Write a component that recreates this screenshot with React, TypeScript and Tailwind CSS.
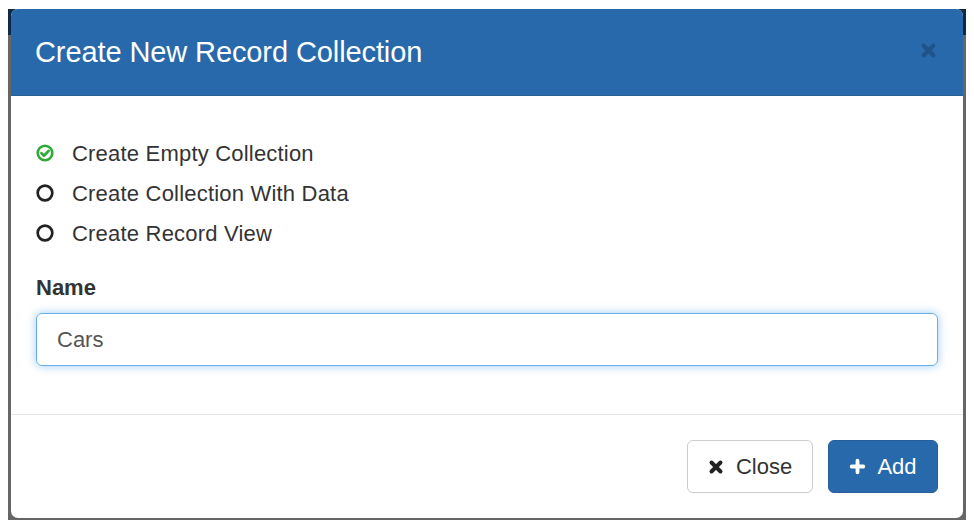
import React from 'react';

// Bold "x" like Font Awesome's fa-times
function TimesIcon({ className = '', width = 3.6 }: { className?: string; width?: number }) {
  return (
    <svg viewBox="0 0 16 16" className={className} fill="none" stroke="currentColor" strokeWidth={width} strokeLinecap="round">
      <path d="M3.5 3.5 L12.5 12.5 M12.5 3.5 L3.5 12.5" />
    </svg>
  );
}

function PlusIcon({ className = '' }: { className?: string }) {
  return (
    <svg viewBox="0 0 16 16" className={className} fill="none" stroke="currentColor" strokeWidth={3.6} strokeLinecap="round">
      <path d="M8 2.5 V13.5 M2.5 8 H13.5" />
    </svg>
  );
}

function RadioIcon({ checked }: { checked: boolean }) {
  if (checked) {
    return (
      <svg viewBox="0 0 16 16" className="w-[18px] h-[18px] text-[#2ea836]" fill="none" stroke="currentColor">
        <circle cx="8" cy="8" r="6.5" strokeWidth={2.3} />
        <path d="M4.8 8.1 L7.1 10.4 L11.2 6.1" strokeWidth={2.4} strokeLinecap="round" strokeLinejoin="round" />
      </svg>
    );
  }
  return (
    <svg viewBox="0 0 16 16" className="w-[18px] h-[18px] text-[#222]" fill="none" stroke="currentColor">
      <circle cx="8" cy="8" r="6.5" strokeWidth={2.4} />
    </svg>
  );
}

const options = [
  { label: 'Create Empty Collection', checked: true },
  { label: 'Create Collection With Data', checked: false },
  { label: 'Create Record View', checked: false },
];

export default function App() {
  return (
    <div className="w-[974px] h-[528px] bg-white pt-[9px] pl-[8px] font-['Liberation_Sans',Arial,sans-serif] overflow-hidden">
      {/* Backdrop strip behind the modal */}
      <div className="w-[958px] h-[511px] px-[3px] pb-[2px] bg-[linear-gradient(#0f2a45_0_26px,#666_26px)]">
        <div className="w-[952px] h-[509px] bg-white rounded-[7px] overflow-hidden flex flex-col">
          {/* Header */}
          <div className="h-[87px] shrink-0 bg-[#2769aa] flex items-center justify-between pl-[24px] pr-[26px] border-b border-[#2a5f94]">
            <h4 className="text-white text-[29px] leading-none tracking-[-0.1px]">Create New Record Collection</h4>
            <button className="text-[#1f5286] mt-[-4px]">
              <TimesIcon className="w-[17px] h-[17px]" width={3.8} />
            </button>
          </div>

          {/* Body */}
          <div className="px-[25px] pt-[37px] pb-[48px] border-b border-[#e5e5e5]">
            <div className="flex flex-col">
              {options.map((o) => (
                <label key={o.label} className="h-[40px] flex items-center gap-[18px] text-[22px] tracking-[0.2px] text-[#333]">
                  <RadioIcon checked={o.checked} />
                  <span>{o.label}</span>
                </label>
              ))}
            </div>
            <div className="mt-[21px] mb-[11px] text-[22px] font-bold text-[#333] leading-[28px]">Name</div>
            <div className="h-[53px] rounded-[6px] border border-[#66afe9] shadow-[0_0_10px_rgba(102,175,233,0.65)] flex items-center px-[20px] text-[22px] text-[#555]">
              Cars
            </div>
          </div>

          {/* Footer */}
          <div className="flex justify-end gap-[15px] px-[25px] pt-[25px]">
            <button className="w-[126px] h-[53px] rounded-[6px] border border-[#ccc] bg-white flex items-center justify-center gap-[12px] text-[22px] text-[#333]">
              <TimesIcon className="w-[16px] h-[16px] text-[#222]" width={4} />
              <span>Close</span>
            </button>
            <button className="w-[110px] h-[53px] rounded-[6px] border border-[#245f9a] bg-[#2769aa] flex items-center justify-center gap-[11px] text-[22px] text-white">
              <PlusIcon className="w-[17px] h-[17px]" />
              <span>Add</span>
            </button>
          </div>
        </div>
      </div>
    </div>
  );
}
